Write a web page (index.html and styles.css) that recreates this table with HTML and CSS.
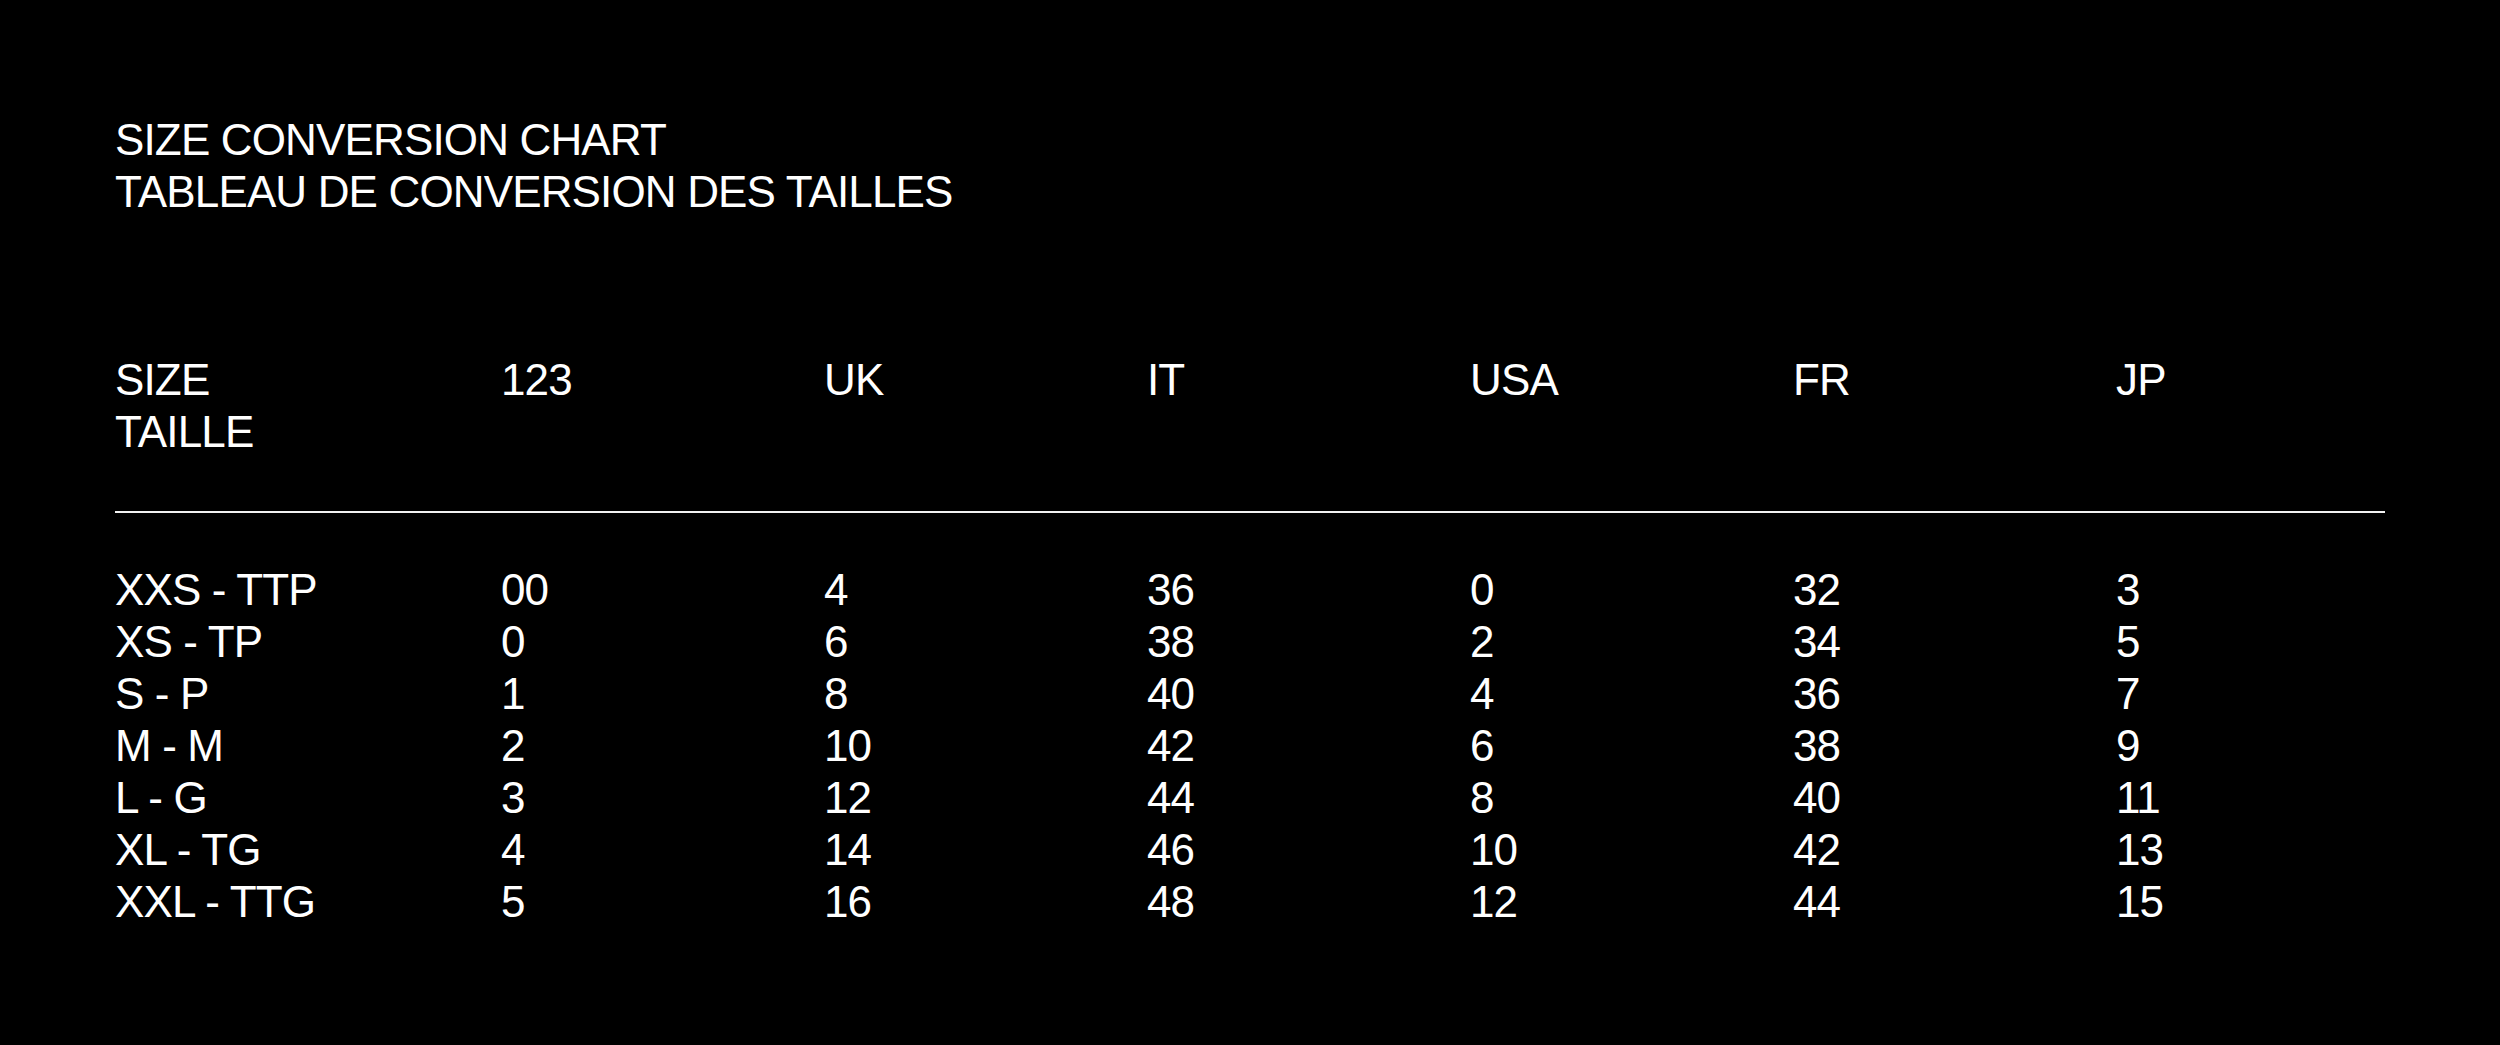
FILE: index.html
```html
<!DOCTYPE html>
<html lang="fr">
<head>
<meta charset="utf-8">
<title>Size Conversion Chart</title>
<link rel="stylesheet" href="styles.css">
</head>
<body>
<main class="page">
  <header class="title">
    <div>SIZE CONVERSION CHART</div>
    <div>TABLEAU DE CONVERSION DES TAILLES</div>
  </header>
  <section class="chart">
    <div class="row head">
      <div>SIZE<br>TAILLE</div><div>123</div><div>UK</div><div>IT</div><div>USA</div><div>FR</div><div>JP</div>
    </div>
    <div class="rule"></div>
    <div class="body">
      <div class="row"><div>XXS - TTP</div><div>00</div><div>4</div><div>36</div><div>0</div><div>32</div><div>3</div></div>
      <div class="row"><div>XS - TP</div><div>0</div><div>6</div><div>38</div><div>2</div><div>34</div><div>5</div></div>
      <div class="row"><div>S - P</div><div>1</div><div>8</div><div>40</div><div>4</div><div>36</div><div>7</div></div>
      <div class="row"><div>M - M</div><div>2</div><div>10</div><div>42</div><div>6</div><div>38</div><div>9</div></div>
      <div class="row"><div>L - G</div><div>3</div><div>12</div><div>44</div><div>8</div><div>40</div><div>11</div></div>
      <div class="row"><div>XL - TG</div><div>4</div><div>14</div><div>46</div><div>10</div><div>42</div><div>13</div></div>
      <div class="row"><div>XXL - TTG</div><div>5</div><div>16</div><div>48</div><div>12</div><div>44</div><div>15</div></div>
    </div>
  </section>
</main>
</body>
</html>
```

FILE: styles.css
```css
html, body {
  margin: 0;
  padding: 0;
  background: #000;
}
body {
  color: #fff;
  font-family: "Liberation Sans", Arial, sans-serif;
  font-size: 44px;
  line-height: 52px;
  letter-spacing: -0.85px;
}
.page {
  width: 2500px;
  height: 1045px;
  box-sizing: border-box;
  padding: 114px 115px 0 115px;
}
.title {
  margin-bottom: 136px;
}
.chart {
  width: 2270px;
}
.row {
  display: grid;
  grid-template-columns: 386px repeat(5, 323px) 1fr;
}
.rule {
  height: 2px;
  background: #f2f2f2;
  margin: 53px 0 51px 0;
}
```
